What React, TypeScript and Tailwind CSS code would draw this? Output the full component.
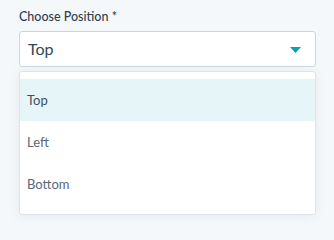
import { useState } from "react";

const options = ["Top", "Left", "Bottom"];

export default function App() {
  const [value, setValue] = useState("Top");
  const [open, setOpen] = useState(true);

  return (
    <div
      className="min-h-screen w-full bg-[#f5f8fa] pl-[19px] pr-[18px] pt-[9px]"
      style={{ fontFamily: "Lato, 'Open Sans', sans-serif" }}
    >
      <label className="block text-[12.5px] leading-[16px] font-medium text-[#2e3f50] mb-[6px]">
        Choose Position *
      </label>
      <div className="relative">
        <button
          type="button"
          onClick={() => setOpen(!open)}
          className="flex h-[36px] w-full items-center justify-between rounded-[3px] border border-[#cbd6e2] bg-white pl-[8px] pr-[14px] text-[16px] text-[#33475b]"
        >
          <span>{value}</span>
          <svg width="11" height="6" viewBox="0 0 11 6" className="mt-[2px]">
            <path d="M0 0h11L5.5 6z" fill="#00a4bd" />
          </svg>
        </button>
        {open && (
          <ul className="absolute left-0 right-0 top-[40px] rounded-[3px] border border-[#dfe3eb] bg-white pt-[7px] pb-[9px] shadow-[0_1px_12px_rgba(45,62,80,0.08)]">
            {options.map((opt) => (
              <li
                key={opt}
                onClick={() => {
                  setValue(opt);
                  setOpen(false);
                }}
                className={`flex h-[42px] items-center pl-[7px] pt-[2px] text-[13px] ${
                  opt === value
                    ? "bg-[#e5f5f8] text-[#3d4f63]"
                    : "text-[#5a6776]"
                }`}
              >
                {opt}
              </li>
            ))}
          </ul>
        )}
      </div>
    </div>
  );
}
